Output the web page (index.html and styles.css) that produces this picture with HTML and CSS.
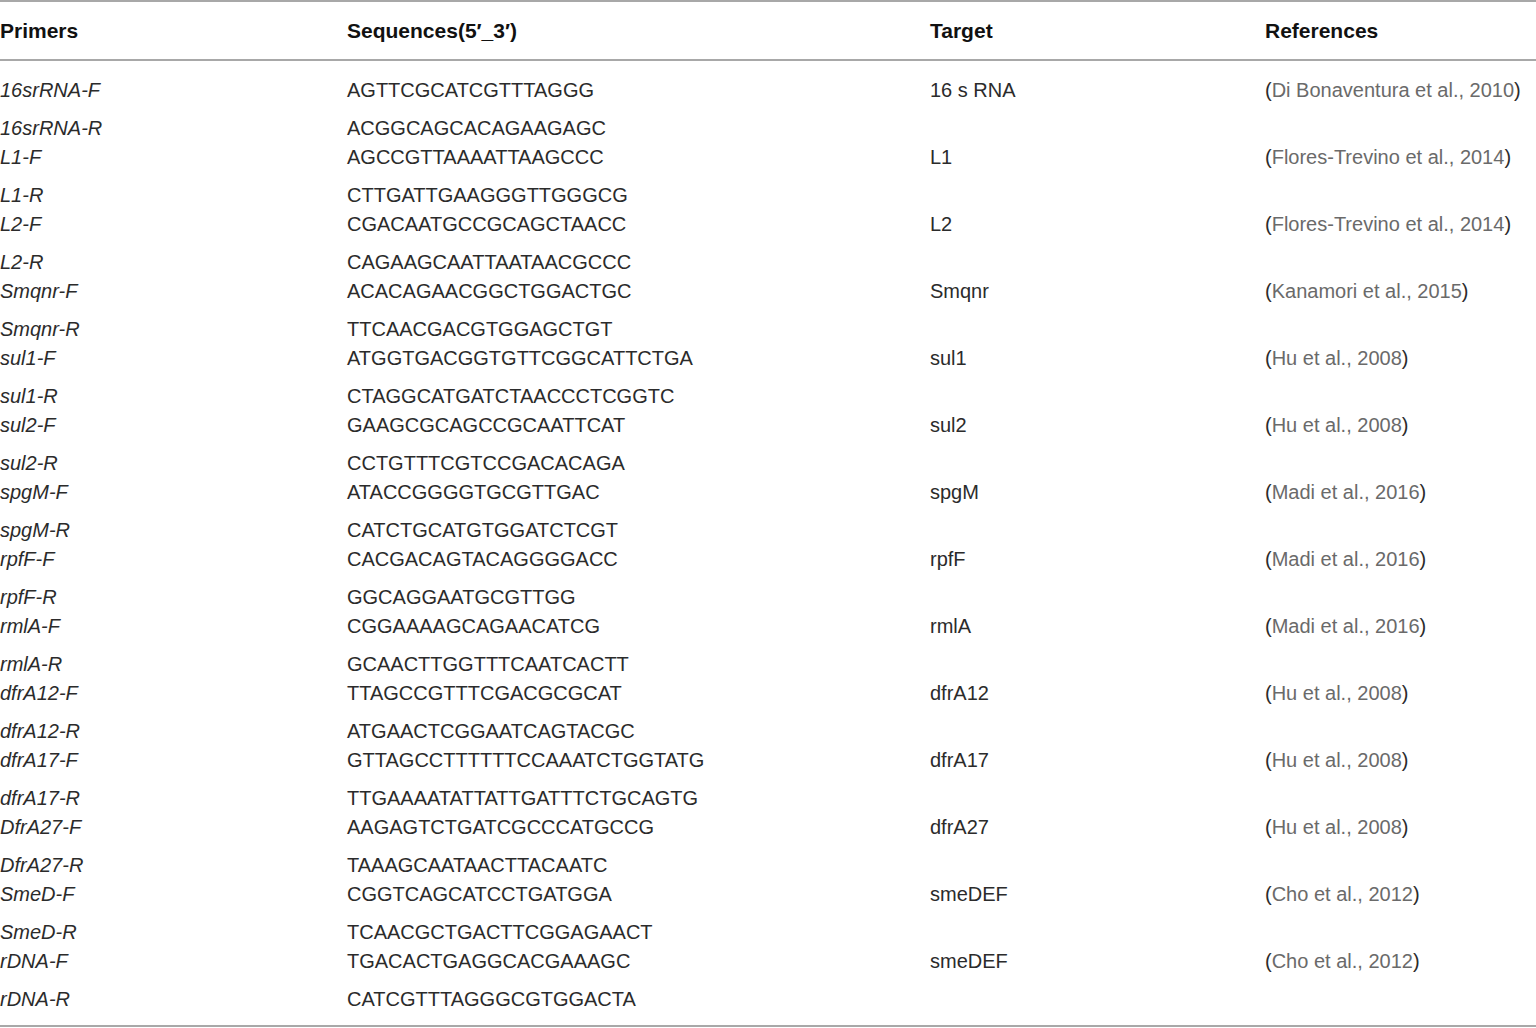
FILE: index.html
```html
<!DOCTYPE html>
<html>
<head>
<meta charset="utf-8">
<link rel="stylesheet" href="styles.css">
</head>
<body>
<div class="table">
  <div class="head row">
    <div class="c1">Primers</div>
    <div class="c2">Sequences(5′_3′)</div>
    <div class="c3">Target</div>
    <div class="c4">References</div>
  </div>
  <div class="body">
    <div class="pair">
      <div class="c1"><div class="ln">16srRNA-F</div><div class="ln">16srRNA-R</div></div>
      <div class="c2"><div class="ln">AGTTCGCATCGTTTAGGG</div><div class="ln">ACGGCAGCACAGAAGAGC</div></div>
      <div class="c3"><div class="ln">16 s RNA</div></div>
      <div class="c4"><div class="ln">(<span class="ref">Di Bonaventura et al., 2010</span>)</div></div>
    </div>
    <div class="pair">
      <div class="c1"><div class="ln">L1-F</div><div class="ln">L1-R</div></div>
      <div class="c2"><div class="ln">AGCCGTTAAAATTAAGCCC</div><div class="ln">CTTGATTGAAGGGTTGGGCG</div></div>
      <div class="c3"><div class="ln">L1</div></div>
      <div class="c4"><div class="ln">(<span class="ref">Flores-Trevino et al., 2014</span>)</div></div>
    </div>
    <div class="pair">
      <div class="c1"><div class="ln">L2-F</div><div class="ln">L2-R</div></div>
      <div class="c2"><div class="ln">CGACAATGCCGCAGCTAACC</div><div class="ln">CAGAAGCAATTAATAACGCCC</div></div>
      <div class="c3"><div class="ln">L2</div></div>
      <div class="c4"><div class="ln">(<span class="ref">Flores-Trevino et al., 2014</span>)</div></div>
    </div>
    <div class="pair">
      <div class="c1"><div class="ln">Smqnr-F</div><div class="ln">Smqnr-R</div></div>
      <div class="c2"><div class="ln">ACACAGAACGGCTGGACTGC</div><div class="ln">TTCAACGACGTGGAGCTGT</div></div>
      <div class="c3"><div class="ln">Smqnr</div></div>
      <div class="c4"><div class="ln">(<span class="ref">Kanamori et al., 2015</span>)</div></div>
    </div>
    <div class="pair">
      <div class="c1"><div class="ln">sul1-F</div><div class="ln">sul1-R</div></div>
      <div class="c2"><div class="ln">ATGGTGACGGTGTTCGGCATTCTGA</div><div class="ln">CTAGGCATGATCTAACCCTCGGTC</div></div>
      <div class="c3"><div class="ln">sul1</div></div>
      <div class="c4"><div class="ln">(<span class="ref">Hu et al., 2008</span>)</div></div>
    </div>
    <div class="pair">
      <div class="c1"><div class="ln">sul2-F</div><div class="ln">sul2-R</div></div>
      <div class="c2"><div class="ln">GAAGCGCAGCCGCAATTCAT</div><div class="ln">CCTGTTTCGTCCGACACAGA</div></div>
      <div class="c3"><div class="ln">sul2</div></div>
      <div class="c4"><div class="ln">(<span class="ref">Hu et al., 2008</span>)</div></div>
    </div>
    <div class="pair">
      <div class="c1"><div class="ln">spgM-F</div><div class="ln">spgM-R</div></div>
      <div class="c2"><div class="ln">ATACCGGGGTGCGTTGAC</div><div class="ln">CATCTGCATGTGGATCTCGT</div></div>
      <div class="c3"><div class="ln">spgM</div></div>
      <div class="c4"><div class="ln">(<span class="ref">Madi et al., 2016</span>)</div></div>
    </div>
    <div class="pair">
      <div class="c1"><div class="ln">rpfF-F</div><div class="ln">rpfF-R</div></div>
      <div class="c2"><div class="ln">CACGACAGTACAGGGGACC</div><div class="ln">GGCAGGAATGCGTTGG</div></div>
      <div class="c3"><div class="ln">rpfF</div></div>
      <div class="c4"><div class="ln">(<span class="ref">Madi et al., 2016</span>)</div></div>
    </div>
    <div class="pair">
      <div class="c1"><div class="ln">rmlA-F</div><div class="ln">rmlA-R</div></div>
      <div class="c2"><div class="ln">CGGAAAAGCAGAACATCG</div><div class="ln">GCAACTTGGTTTCAATCACTT</div></div>
      <div class="c3"><div class="ln">rmlA</div></div>
      <div class="c4"><div class="ln">(<span class="ref">Madi et al., 2016</span>)</div></div>
    </div>
    <div class="pair">
      <div class="c1"><div class="ln">dfrA12-F</div><div class="ln">dfrA12-R</div></div>
      <div class="c2"><div class="ln">TTAGCCGTTTCGACGCGCAT</div><div class="ln">ATGAACTCGGAATCAGTACGC</div></div>
      <div class="c3"><div class="ln">dfrA12</div></div>
      <div class="c4"><div class="ln">(<span class="ref">Hu et al., 2008</span>)</div></div>
    </div>
    <div class="pair">
      <div class="c1"><div class="ln">dfrA17-F</div><div class="ln">dfrA17-R</div></div>
      <div class="c2"><div class="ln">GTTAGCCTTTTTTCCAAATCTGGTATG</div><div class="ln">TTGAAAATATTATTGATTTCTGCAGTG</div></div>
      <div class="c3"><div class="ln">dfrA17</div></div>
      <div class="c4"><div class="ln">(<span class="ref">Hu et al., 2008</span>)</div></div>
    </div>
    <div class="pair">
      <div class="c1"><div class="ln">DfrA27-F</div><div class="ln">DfrA27-R</div></div>
      <div class="c2"><div class="ln">AAGAGTCTGATCGCCCATGCCG</div><div class="ln">TAAAGCAATAACTTACAATC</div></div>
      <div class="c3"><div class="ln">dfrA27</div></div>
      <div class="c4"><div class="ln">(<span class="ref">Hu et al., 2008</span>)</div></div>
    </div>
    <div class="pair">
      <div class="c1"><div class="ln">SmeD-F</div><div class="ln">SmeD-R</div></div>
      <div class="c2"><div class="ln">CGGTCAGCATCCTGATGGA</div><div class="ln">TCAACGCTGACTTCGGAGAACT</div></div>
      <div class="c3"><div class="ln">smeDEF</div></div>
      <div class="c4"><div class="ln">(<span class="ref">Cho et al., 2012</span>)</div></div>
    </div>
    <div class="pair">
      <div class="c1"><div class="ln">rDNA-F</div><div class="ln">rDNA-R</div></div>
      <div class="c2"><div class="ln">TGACACTGAGGCACGAAAGC</div><div class="ln">CATCGTTTAGGGCGTGGACTA</div></div>
      <div class="c3"><div class="ln">smeDEF</div></div>
      <div class="c4"><div class="ln">(<span class="ref">Cho et al., 2012</span>)</div></div>
    </div>
  </div>
</div>
</body>
</html>
```

FILE: styles.css
```css
html, body {
  margin: 0;
  padding: 0;
  background: #ffffff;
}
body {
  font-family: "Liberation Sans", Arial, sans-serif;
  font-size: 20px;
  color: #2b2b2b;
}
.table {
  width: 1536px;
  border-top: 2px solid #a8a8a8;
  border-bottom: 2px solid #a8a8a8;
}
.head, .pair {
  display: grid;
  grid-template-columns: 347px 583px 335px 1fr;
}
.head {
  font-weight: bold;
  font-size: 21px;
  color: #111111;
  line-height: 29px;
  padding: 13.5px 0 14.5px;
  border-bottom: 2px solid #a8a8a8;
}
.body {
  padding: 14.5px 0 11px;
}
.ln {
  line-height: 29px;
  height: 29px;
  white-space: nowrap;
}
.ln + .ln {
  margin-top: 9px;
}
.c1 .ln {
  font-style: italic;
}
.ref {
  color: #6a6a6a;
}
```
